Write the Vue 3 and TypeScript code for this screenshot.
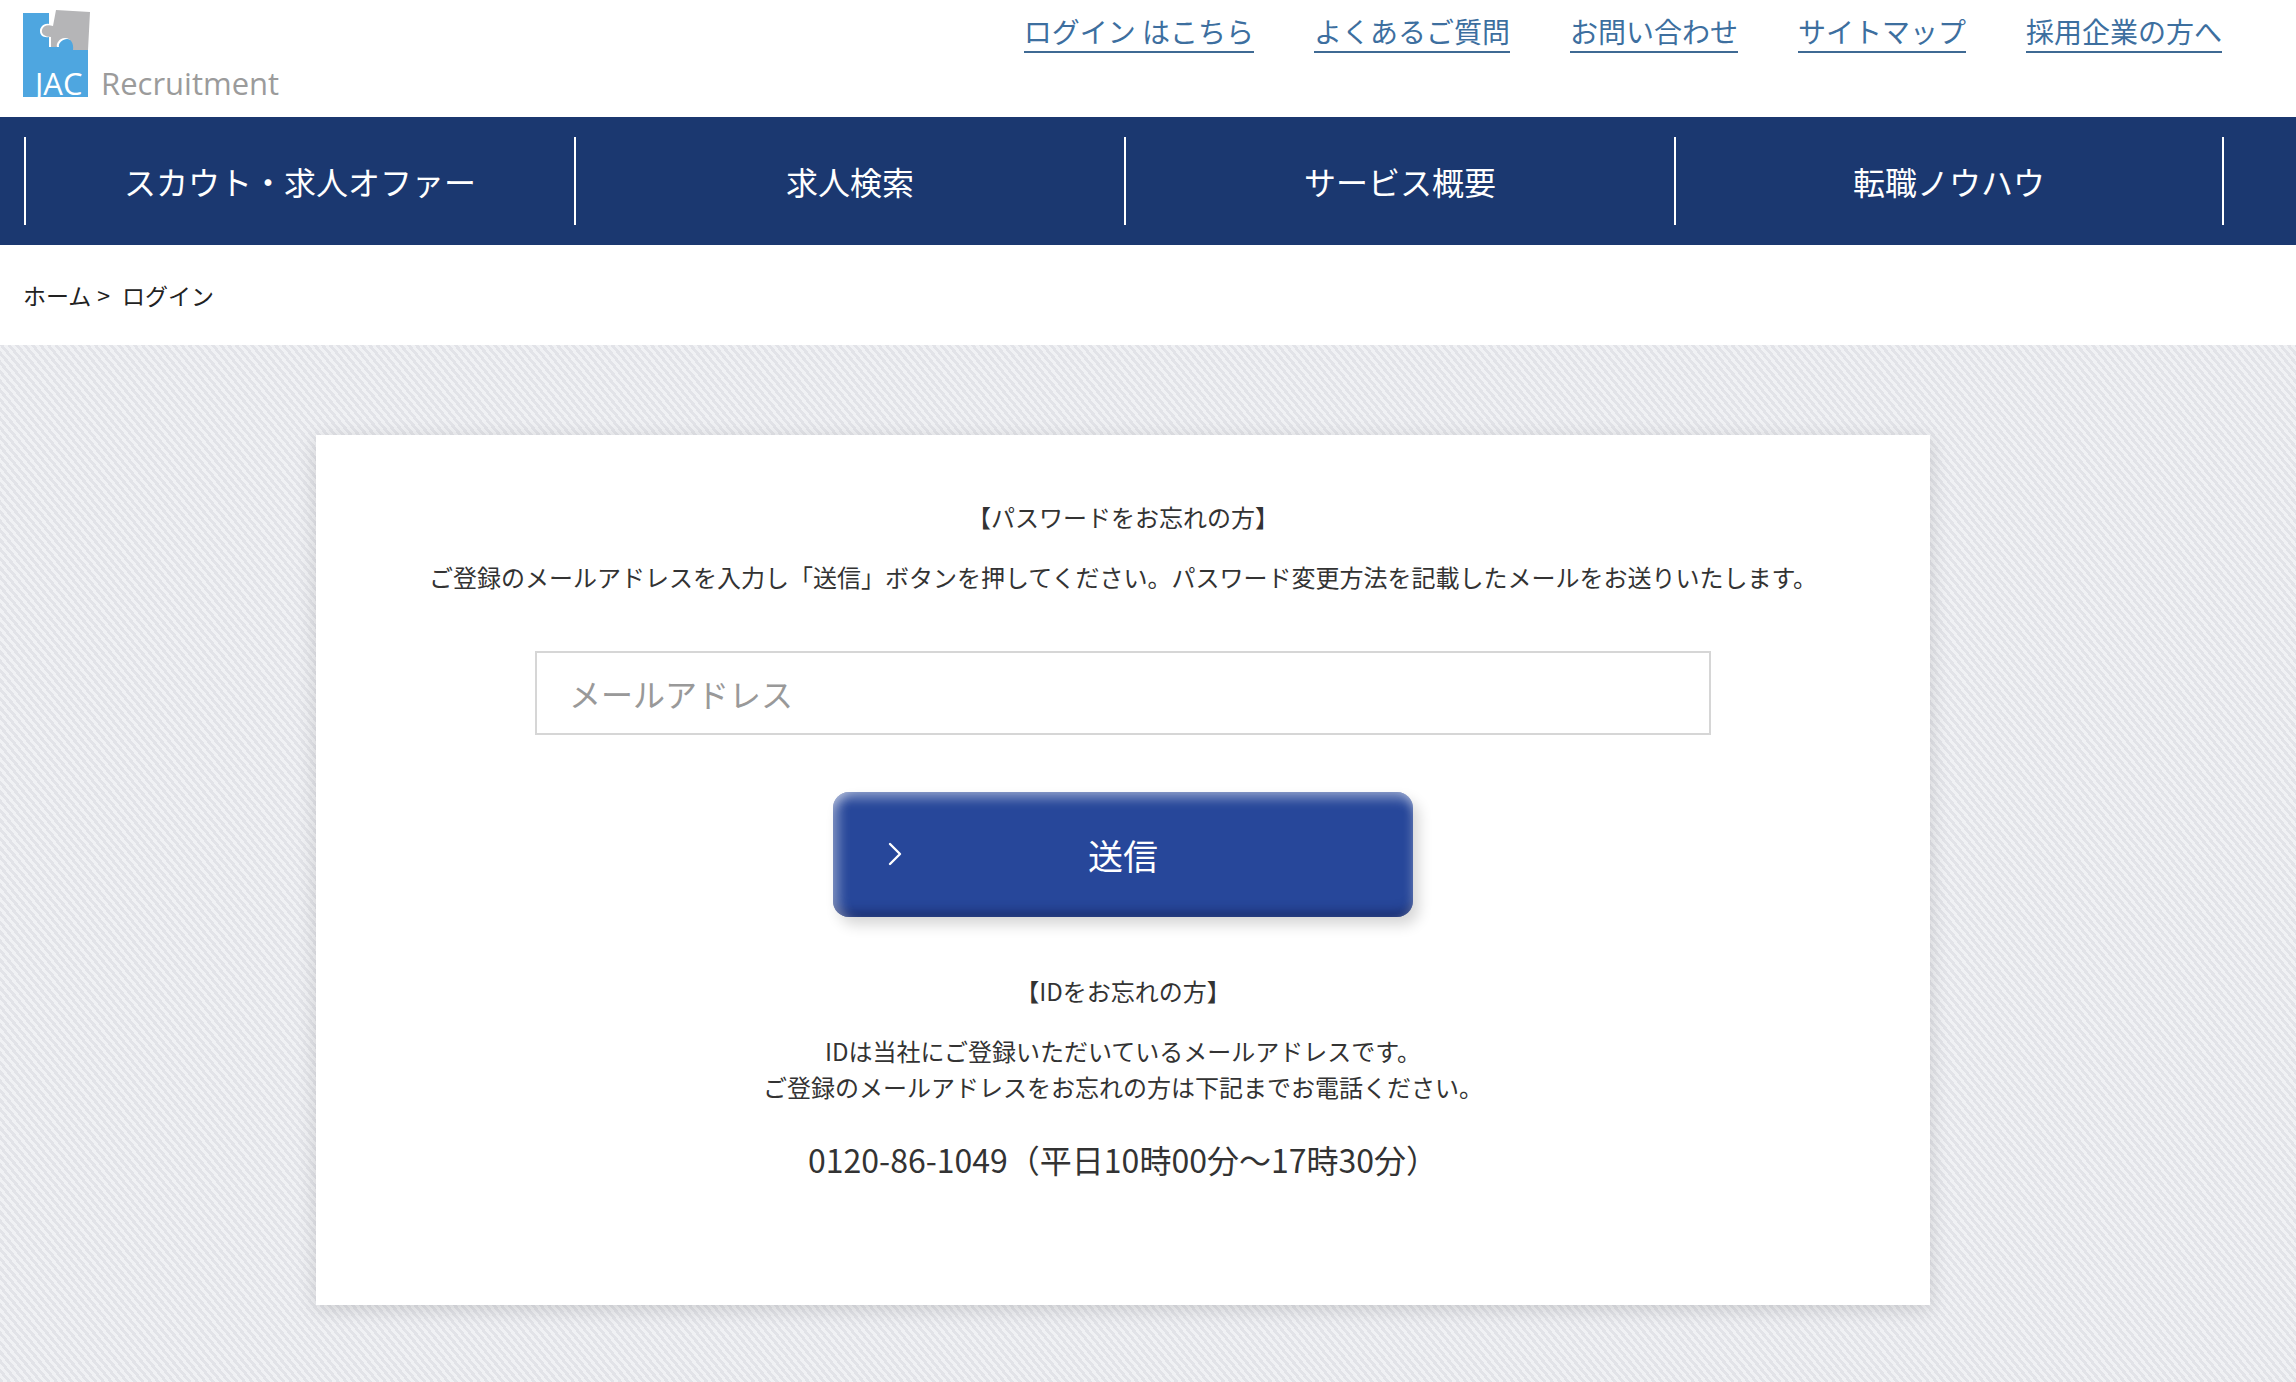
<template>
  <div class="page">
    <header class="site-header">
      <div class="header-inner">
        <a class="logo" href="#">
          <svg class="logo-mark" width="68" height="88" viewBox="0 0 68 88">
            <path d="M0 3H26V14C20 13 17 18 17 21C17 25 20 28 26 27V37H36C35 33 40 29 44 29C49 29 52 33 51 37H65V87H0Z" fill="#4ea6e0" />
            <path d="M33 0L67 2L65 40H50C51 34 48 28 42 28C36 28 33 34 34 37H28V27C22 27 18 24 19 20C20 16 24 14 30 16Z" fill="#b5b5b7" />
            <text x="12" y="85" class="logo-jac">JAC</text>
          </svg>
          <span class="logo-word">Recruitment</span>
        </a>
        <nav class="top-links">
          <a v-for="link in topLinks" :key="link" href="#">{{ link }}</a>
        </nav>
      </div>
    </header>

    <nav class="global-nav">
      <ul class="global-list">
        <li v-for="item in navItems" :key="item">{{ item }}</li>
      </ul>
    </nav>

    <div class="breadcrumb">
      <span>ホーム</span>
      <span class="crumb-sep">&gt;</span>
      <span>ログイン</span>
    </div>

    <main class="main">
      <div class="main-inner">
        <section class="card">
          <p class="heading">【パスワードをお忘れの方】</p>
          <p class="lead">ご登録のメールアドレスを入力し「送信」ボタンを押してください。パスワード変更方法を記載したメールをお送りいたします。</p>
          <input v-model="email" class="email-input" type="text" placeholder="メールアドレス" />
          <button class="submit" type="button">
            <svg class="submit-arrow" width="14" height="24" viewBox="0 0 14 24">
              <path d="M2 2L12 12L2 22" fill="none" stroke="#fff" stroke-width="2.4" stroke-linecap="round" stroke-linejoin="round" />
            </svg>
            送信
          </button>
          <p class="heading id-heading">【IDをお忘れの方】</p>
          <p class="id-text">IDは当社にご登録いただいているメールアドレスです。<br />ご登録のメールアドレスをお忘れの方は下記までお電話ください。</p>
          <p class="phone">0120-86-1049（平日10時00分～17時30分）</p>
        </section>
      </div>
    </main>
  </div>
</template>

<script setup lang="ts">
import { ref } from 'vue'

const email = ref('')

const topLinks = ['ログイン はこちら', 'よくあるご質問', 'お問い合わせ', 'サイトマップ', '採用企業の方へ']
const navItems = ['スカウト・求人オファー', '求人検索', 'サービス概要', '転職ノウハウ']
</script>

<style>
html,
body {
  margin: 0;
  overflow: hidden;
}
</style>

<style scoped>
.page {
  display: flex;
  flex-direction: column;
  min-height: 100vh;
  font-family: "Noto Sans CJK JP", "Noto Sans", sans-serif;
  color: #333;
}

a {
  text-decoration: none;
}

p {
  margin: 0;
}

/* ヘッダー */
.site-header {
  height: 117px;
  background: #fff;
}

.header-inner {
  display: flex;
  justify-content: space-between;
  align-items: flex-start;
  width: 2246px;
  box-sizing: border-box;
  padding: 10px 24px 0 23px;
}

.logo {
  display: flex;
  align-items: flex-end;
  gap: 10px;
}

.logo-mark {
  display: block;
}

.logo-jac {
  font-family: "Open Sans", sans-serif;
  font-size: 31px;
  fill: #fff;
}

.logo-word {
  font-family: "Open Sans", sans-serif;
  font-size: 31px;
  line-height: 36px;
  margin-bottom: -3px;
  color: #9b9b9b;
}

.top-links {
  display: flex;
  gap: 60px;
  padding-top: 1px;
}

.top-links a {
  font-size: 28px;
  line-height: 40px;
  color: #3d6f9f;
  border-bottom: 2px solid #3f6a94;
}

/* グローバルナビ */
.global-nav {
  height: 128px;
  background: #1b3870;
}

.global-list {
  display: flex;
  width: 2246px;
  box-sizing: border-box;
  margin: 0;
  padding: 20px 24px 0;
  list-style: none;
}

.global-list li {
  flex: 0 0 550px;
  height: 88px;
  border-left: 2px solid #fff;
  box-sizing: border-box;
  display: flex;
  align-items: center;
  justify-content: center;
  font-size: 32px;
  color: #fff;
}

.global-list li:last-child {
  flex-basis: 550px;
  border-right: 2px solid #fff;
}

.breadcrumb {
  display: flex;
  align-items: center;
  height: 100px;
  padding-left: 23px;
  font-size: 23px;
  color: #222;
  background: #fff;
}

.crumb-sep {
  margin: 0 12px 0 6px;
}

/* メイン */
.main {
  flex: 1;
  background: repeating-linear-gradient(50deg, #e2e3e8 0, #e2e3e8 3px, #f0f1f4 3px, #f0f1f4 6px);
}

.main-inner {
  display: flex;
  justify-content: center;
  width: 2246px;
  padding-top: 90px;
}

.card {
  display: flex;
  flex-direction: column;
  align-items: center;
  width: 1614px;
  height: 870px;
  box-sizing: border-box;
  padding-top: 64px;
  background: #fff;
  box-shadow: 0 4px 18px rgba(0, 0, 0, 0.14);
  font-size: 24px;
  line-height: 36px;
  color: #333;
}

.lead {
  margin-top: 24px;
}

.email-input {
  width: 1176px;
  height: 84px;
  box-sizing: border-box;
  margin-top: 56px;
  padding: 0 32px;
  border: 2px solid #d6d6d6;
  outline: none;
  font-family: inherit;
  font-size: 32px;
  color: #333;
  background: #fff;
}

.email-input::placeholder {
  color: #999;
}

.submit {
  position: relative;
  width: 580px;
  height: 125px;
  margin-top: 57px;
  border: none;
  border-radius: 16px;
  font-family: inherit;
  font-size: 35px;
  color: #fff;
  background: #27479a;
  box-shadow:
    inset 0 14px 12px -8px rgba(255, 255, 255, 0.45),
    inset 14px 0 12px -8px rgba(255, 255, 255, 0.4),
    inset -8px 0 8px -6px rgba(255, 255, 255, 0.25),
    inset 0 -12px 10px -6px rgba(20, 30, 80, 0.5),
    6px 8px 14px rgba(0, 0, 0, 0.16);
}

.submit-arrow {
  position: absolute;
  left: 55px;
  top: 50px;
}

.id-heading {
  margin-top: 56px;
}

.id-text {
  margin-top: 24px;
  text-align: center;
}

.phone {
  margin-top: 32px;
  font-size: 32px;
  line-height: 44px;
}
</style>
